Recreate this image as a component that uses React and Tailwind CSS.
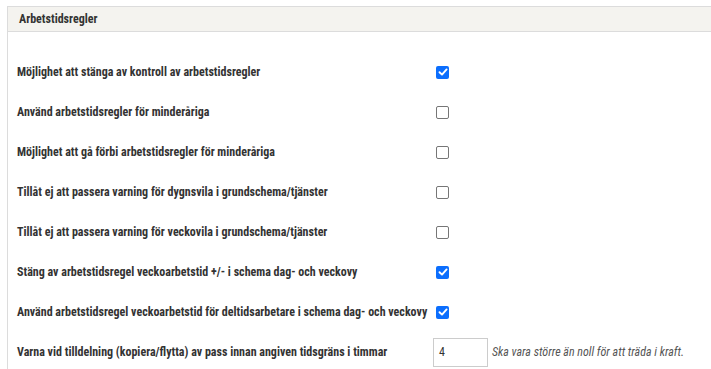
import React from 'react';

const rules = [
  { label: 'Möjlighet att stänga av kontroll av arbetstidsregler', checked: true },
  { label: 'Använd arbetstidsregler för minderåriga', checked: false },
  { label: 'Möjlighet att gå förbi arbetstidsregler för minderåriga', checked: false },
  { label: 'Tillåt ej att passera varning för dygnsvila i grundschema/tjänster', checked: false },
  { label: 'Tillåt ej att passera varning för veckovila i grundschema/tjänster', checked: false },
  { label: 'Stäng av arbetstidsregel veckoarbetstid +/- i schema dag- och veckovy', checked: true },
  { label: 'Använd arbetstidsregel veckoarbetstid för deltidsarbetare i schema dag- och veckovy', checked: true },
];

function Checkbox({ checked }) {
  if (checked) {
    return (
      <span className="w-[13px] h-[13px] rounded-[2px] bg-[#0b6efd] flex items-center justify-center">
        <svg width="10" height="10" viewBox="0 0 10 10" fill="none">
          <path d="M1.5 5.2 L4 7.6 L8.6 2.4" stroke="white" strokeWidth="1.9" strokeLinecap="round" strokeLinejoin="round" />
        </svg>
      </span>
    );
  }
  return <span className="w-[13px] h-[13px] rounded-[2px] border border-[#767676] bg-white" />;
}

export default function App() {
  return (
    <div className="w-[711px] h-[369px] bg-white overflow-hidden pt-[6px] pl-[7px] text-[#333] font-['Roboto_Condensed','DejaVu_Sans_Condensed','Roboto',sans-serif] [font-stretch:condensed]">
      <div className="w-[720px] h-[400px] border-t border-l border-[#dcdcdc]">
        <div className="h-[25px] bg-[#f4f3ef] border-b border-[#dcdcdc] flex items-center pl-[11px] text-[12px] font-bold">
          Arbetstidsregler
        </div>
        <div className="pt-[20px] pl-[9px]">
          {rules.map((r, i) => (
            <div key={i} className="h-[40px] flex items-center">
              <div className="w-[419px] text-[12px] font-bold whitespace-nowrap">{r.label}</div>
              <Checkbox checked={r.checked} />
            </div>
          ))}
          <div className="h-[40px] flex items-center">
            <div className="w-[416px] text-[12px] font-bold whitespace-nowrap">
              Varna vid tilldelning (kopiera/flytta) av pass innan angiven tidsgräns i timmar
            </div>
            <div className="w-[55px] h-[29px] border border-[#ccc] flex items-center pl-[5px] text-[12px]">4</div>
            <span className="ml-[4px] text-[12px] italic text-[#555]">Ska vara större än noll för att träda i kraft.</span>
          </div>
        </div>
      </div>
    </div>
  );
}
